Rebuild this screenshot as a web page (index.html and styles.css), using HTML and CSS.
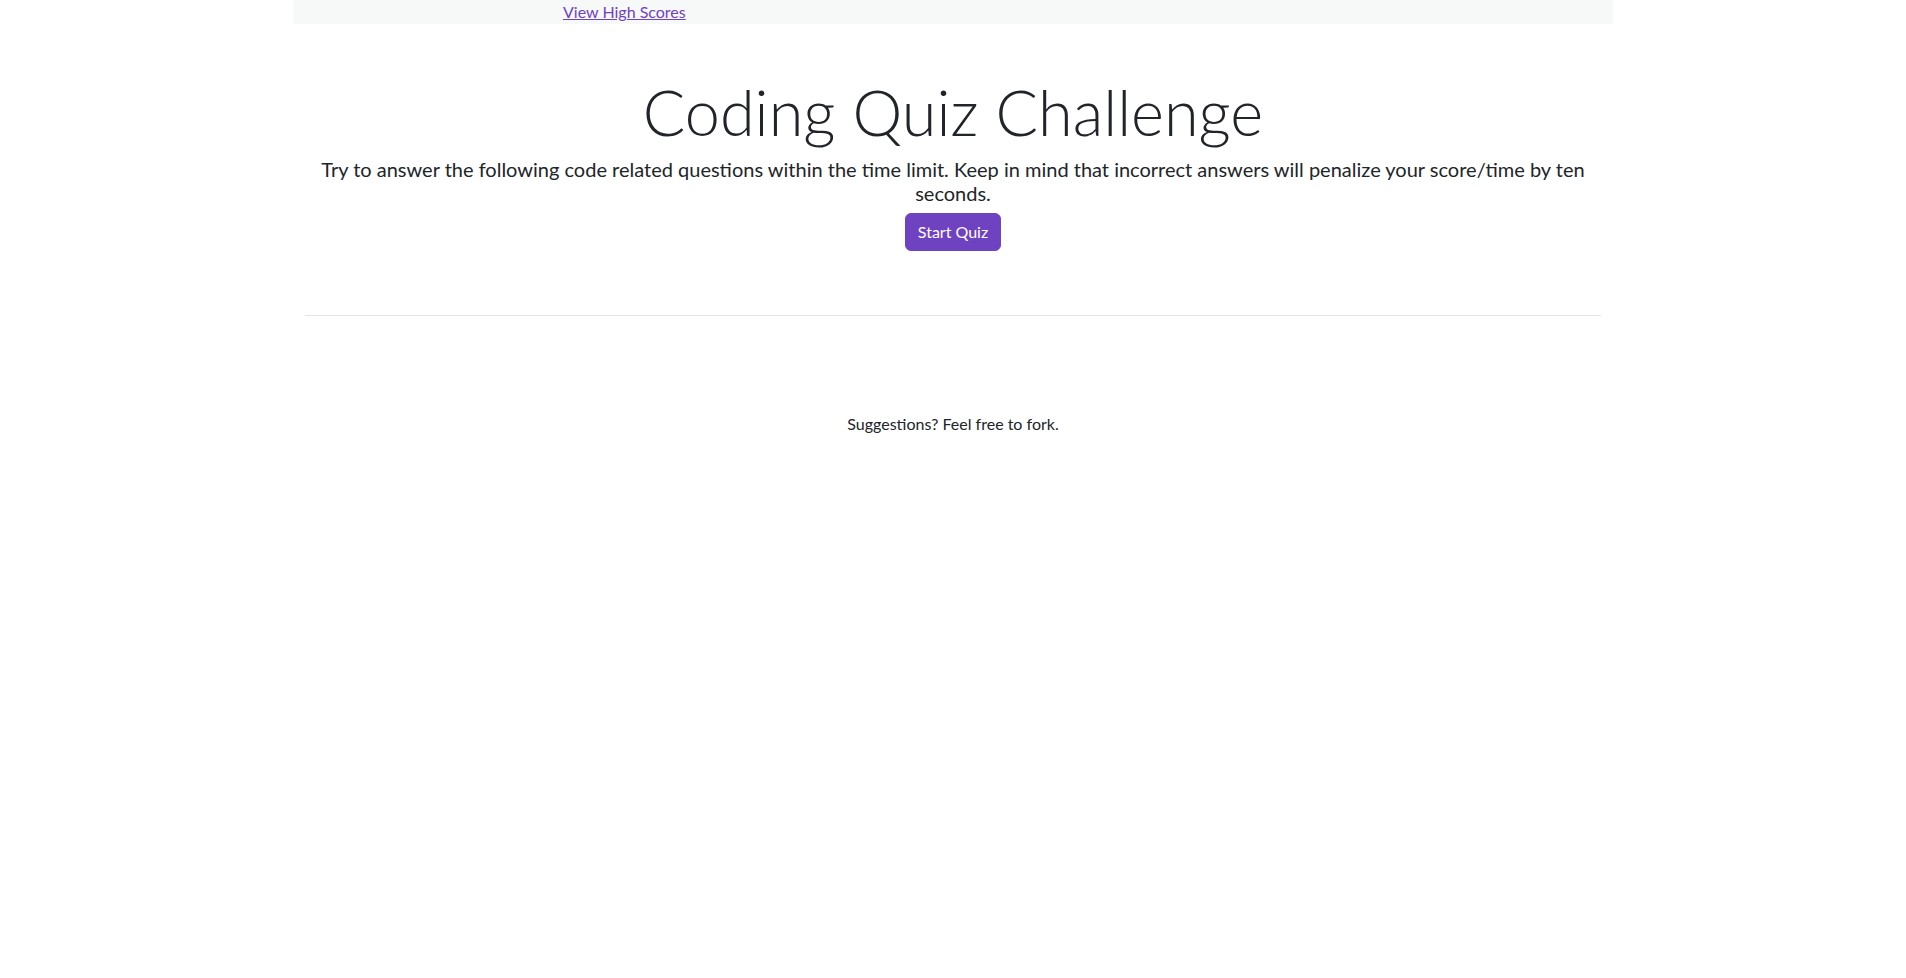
FILE: index.html
```html
<!DOCTYPE html>
<html lang="en">
<head>
<meta charset="utf-8">
<title>Coding Quiz Challenge</title>
<link rel="stylesheet" href="styles.css">
</head>
<body>
<nav class="topbar">
  <a class="scores-link" href="#">View High Scores</a>
</nav>
<main class="container">
  <section class="intro">
    <h1 class="intro-title">Coding Quiz Challenge</h1>
    <p class="intro-lead">Try to answer the following code related questions within the time limit. Keep in mind that incorrect answers will penalize your score/time by ten seconds.</p>
    <button class="btn-start" type="button">Start Quiz</button>
  </section>
  <hr class="divider">
  <footer class="page-footer">
    <p class="footer-text">Suggestions? Feel free to fork.</p>
  </footer>
</main>
</body>
</html>
```
FILE: styles.css
```css
html, body {
  margin: 0;
  padding: 0;
  background: #fff;
}
body {
  font-family: "Lato", "Liberation Sans", sans-serif;
  font-size: 16px;
  line-height: 1.5;
  color: #212529;
}
.topbar {
  width: 1320px;
  margin: 0 auto;
  height: 24px;
  background: #f7f9f8;
  padding-left: 270px;
  box-sizing: border-box;
  display: flex;
  align-items: center;
}
.scores-link {
  color: #6f42c1;
  text-decoration: underline;
  font-size: 16px;
  line-height: 24px;
}
.container {
  width: 1320px;
  margin: 0 auto;
  padding: 0 12px;
  box-sizing: border-box;
}
.intro {
  text-align: center;
  padding: 50px 0 0;
  display: flex;
  flex-direction: column;
  align-items: center;
}
.intro-title {
  margin: 0 0 7px;
  font-size: 63px;
  font-weight: 300;
  line-height: 1.2;
  color: #212529;
}
.intro-lead {
  margin: 0 0 8px;
  font-size: 20px;
  line-height: 24px;
}
.btn-start {
  font-family: inherit;
  font-size: 16px;
  line-height: 24px;
  padding: 6px 12px;
  color: #fff;
  background: #6f42c1;
  border: 1px solid #6f42c1;
  border-radius: 6px;
  cursor: pointer;
}
.divider {
  margin: 64px 0 0;
  border: 0;
  border-top: 1px solid #e3e3e3;
  height: 0;
}
.page-footer {
  text-align: center;
  padding-top: 96px;
}
.footer-text {
  margin: 0;
}
```
